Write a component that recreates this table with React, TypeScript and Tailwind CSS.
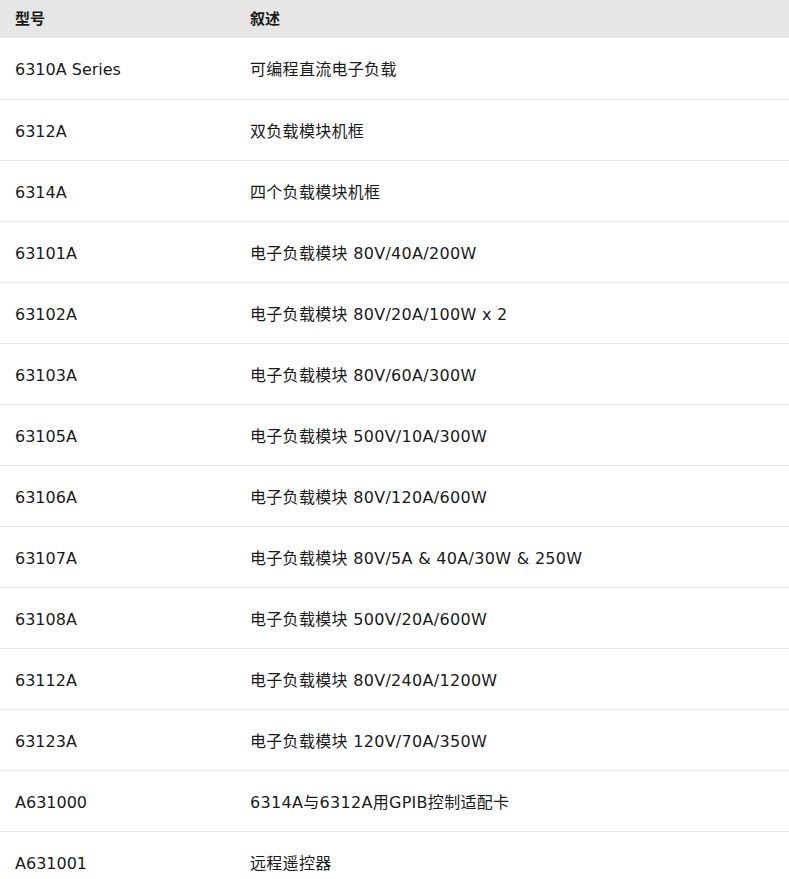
const rows = [
  { model: "6310A Series", desc: "可编程直流电子负载" },
  { model: "6312A", desc: "双负载模块机框" },
  { model: "6314A", desc: "四个负载模块机框" },
  { model: "63101A", desc: "电子负载模块 80V/40A/200W" },
  { model: "63102A", desc: "电子负载模块 80V/20A/100W x 2" },
  { model: "63103A", desc: "电子负载模块 80V/60A/300W" },
  { model: "63105A", desc: "电子负载模块 500V/10A/300W" },
  { model: "63106A", desc: "电子负载模块 80V/120A/600W" },
  { model: "63107A", desc: "电子负载模块 80V/5A & 40A/30W & 250W" },
  { model: "63108A", desc: "电子负载模块 500V/20A/600W" },
  { model: "63112A", desc: "电子负载模块 80V/240A/1200W" },
  { model: "63123A", desc: "电子负载模块 120V/70A/350W" },
  { model: "A631000", desc: "6314A与6312A用GPIB控制适配卡" },
  { model: "A631001", desc: "远程遥控器" },
];

export default function App() {
  return (
    <div className="w-[789px] bg-white text-[#1a1a1a] font-['DejaVu_Sans','Noto_Sans_CJK_SC',sans-serif]">
      <table className="w-full border-collapse text-left table-fixed">
        <thead>
          <tr className="bg-[#e6e6e6] h-[38px]">
            <th className="w-[250px] pl-[15px] text-[15px] font-bold">型号</th>
            <th className="text-[15px] font-bold">叙述</th>
          </tr>
        </thead>
        <tbody>
          {rows.map((r) => (
            <tr key={r.model} className="h-[61px] border-b border-[#e6e6e6]">
              <td className="pl-[15px] pt-[4px] text-[16px]">{r.model}</td>
              <td className="pt-[4px] text-[16px] tracking-[0.3px]">{r.desc}</td>
            </tr>
          ))}
        </tbody>
      </table>
    </div>
  );
}
